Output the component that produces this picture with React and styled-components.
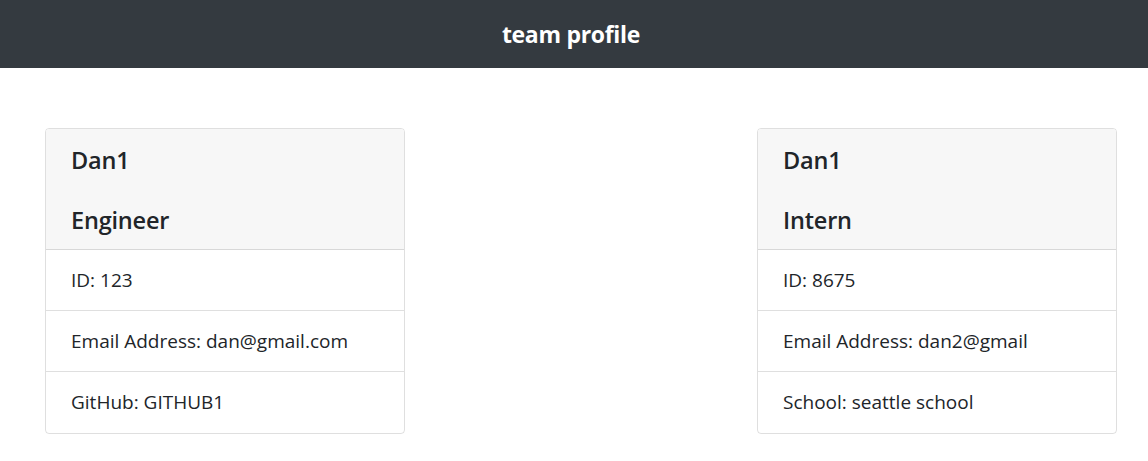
import styled, { createGlobalStyle } from "styled-components"

const Global = createGlobalStyle`
body{
  margin:0;
  background:#fff;
  font-family:"Open Sans","Noto Sans",sans-serif;
  color:#212529;
}
`
const Header = styled.header`
height:68px;
background:#343a40;
display:flex;
align-items:center;
justify-content:center;
padding-right:6px;
`
const Title = styled.h1`
margin:0;
color:#fff;
font-size:23px;
font-weight:700;
letter-spacing:-0.3px;
`
const Team = styled.main`
display:flex;
justify-content:space-between;
padding:60px 31px 0 45px;
`
const Card = styled.div`
width:360px;
box-sizing:border-box;
border:1px solid rgba(0,0,0,.125);
border-radius:4px;
overflow:hidden;
`
const CardHead = styled.div`
background:#f7f7f7;
border-bottom:1px solid rgba(0,0,0,.125);
padding:15px 25px 13px;
`
const Heading = styled.h3`
margin:0 0 ${props=>props.gap||0};
font-size:23.5px;
font-weight:600;
line-height:32px;
letter-spacing:-0.2px;
`
const List = styled.ul`
list-style:none;
margin:0;
padding:0;
`
const Item = styled.li`
padding:16px 25px;
font-size:19px;
line-height:28px;
&:last-child{padding-bottom:17px;}
& + &{border-top:1px solid rgba(0,0,0,.125);}
`

const members = [
  {name:'Dan1', role:'Engineer', id:'123', email:'dan@gmail.com', extra:'GitHub: GITHUB1'},
  {name:'Dan1', role:'Intern', id:'8675', email:'dan2@gmail', extra:'School: seattle school'},
]

const App = () => {
  return(
    <>
      <Global/>
      <Header><Title>team profile</Title></Header>
      <Team>
        {members.map((m,i)=>
          <Card key={i}>
            <CardHead>
              <Heading gap="28px">{m.name}</Heading>
              <Heading>{m.role}</Heading>
            </CardHead>
            <List>
              <Item>ID: {m.id}</Item>
              <Item>Email Address: {m.email}</Item>
              <Item>{m.extra}</Item>
            </List>
          </Card>
        )}
      </Team>
    </>
  )
}
export default App
